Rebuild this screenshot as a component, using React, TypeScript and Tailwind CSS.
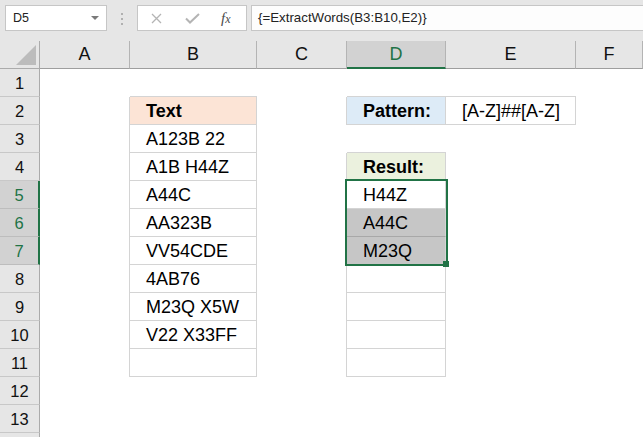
import React from 'react'

type Cell = { text: string; bold?: boolean; bg?: string }

const COLS = ['A', 'B', 'C', 'D', 'E', 'F']
const ROWS = Array.from({ length: 14 }, (_, i) => i + 1)

// cells that carry a thin border
const bordered = new Set([
  'B2', 'B3', 'B4', 'B5', 'B6', 'B7', 'B8', 'B9', 'B10', 'B11',
  'D2', 'E2',
  'D4', 'D5', 'D6', 'D7', 'D8', 'D9', 'D10', 'D11',
])

const cells: Record<string, Cell> = {
  B2: { text: 'Text', bold: true, bg: 'bg-[#fce4d6]' },
  B3: { text: 'A123B 22' },
  B4: { text: 'A1B H44Z' },
  B5: { text: 'A44C' },
  B6: { text: 'AA323B' },
  B7: { text: 'VV54CDE' },
  B8: { text: '4AB76' },
  B9: { text: 'M23Q X5W' },
  B10: { text: 'V22 X33FF' },
  D2: { text: 'Pattern:', bold: true, bg: 'bg-[#ddebf7]' },
  E2: { text: '[A-Z]##[A-Z]' },
  D4: { text: 'Result:', bold: true, bg: 'bg-[#ebf1de]' },
  D5: { text: 'H44Z' },
  D6: { text: 'A44C', bg: 'bg-[#c6c6c6]' },
  D7: { text: 'M23Q', bg: 'bg-[#c6c6c6]' },
}

const nextCol = (c: string) => COLS[COLS.indexOf(c) + 1]

function SheetCell({ col, row }: { col: string; row: number }) {
  const id = `${col}${row}`
  const cell = cells[id]
  const right = bordered.has(id) || (nextCol(col) && bordered.has(`${nextCol(col)}${row}`))
  const bottom = bordered.has(id) || bordered.has(`${col}${row + 1}`)
  const darkBottom = id === 'D6'
  return (
    <div
      className={`flex items-center pl-[16px] pt-[1px] whitespace-nowrap text-[18px] text-black ${
        cell?.bg ?? 'bg-white'
      } ${cell?.bold ? 'font-bold' : ''} ${right ? 'border-r border-r-[#d4d4d4]' : ''} ${
        bottom ? (darkBottom ? 'border-b border-b-[#a8a8a8]' : 'border-b border-b-[#d4d4d4]') : ''
      }`}
    >
      {cell?.text}
    </div>
  )
}

export default function App() {
  return (
    <div className="w-[643px] h-[437px] overflow-hidden bg-white font-['Liberation_Sans',Arial,sans-serif]">
      {/* formula bar */}
      <div className="h-[41px] bg-[#e6e6e6] flex items-start pt-[5px]">
        <div className="ml-[5px] w-[102px] h-[26px] bg-white border border-[#c6c6c6] flex items-center justify-between pl-[7px] pr-[7px]">
          <span className="text-[12.5px] text-[#222]">D5</span>
          <svg width="8" height="4" viewBox="0 0 8 4">
            <path d="M0 0h8L4 4z" fill="#7a7a7a" />
          </svg>
        </div>
        <div className="ml-[14px] mt-[8px] flex flex-col gap-[3px]">
          <div className="w-[2px] h-[2px] bg-[#b0b0b0]" />
          <div className="w-[2px] h-[2px] bg-[#b0b0b0]" />
          <div className="w-[2px] h-[2px] bg-[#b0b0b0]" />
        </div>
        <div className="ml-[14px] w-[110px] h-[26px] bg-white border border-[#c6c6c6] flex items-center pl-[13px]">
          <svg width="11" height="11" viewBox="0 0 11 11">
            <path d="M1 1L10 10M10 1L1 10" stroke="#b4b4b4" strokeWidth="1.3" />
          </svg>
          <svg className="ml-[23px]" width="15" height="11" viewBox="0 0 15 11">
            <path d="M1 5.5L5 9.5L14 1" stroke="#b4b4b4" strokeWidth="2" fill="none" />
          </svg>
          <span className="ml-[21px] font-['Liberation_Serif',serif] italic text-[15px] text-[#4a4a4a] leading-none">
            f<span className="text-[12px]">x</span>
          </span>
        </div>
        <div className="ml-[4px] flex-1 h-[26px] bg-[#fdfdfd] border-y border-l border-[#c6c6c6] flex items-center pl-[6px]">
          <span className="text-[13.3px] text-[#222] whitespace-nowrap">{'{=ExtractWords(B3:B10,E2)}'}</span>
        </div>
      </div>

      {/* sheet */}
      <div className="relative grid grid-cols-[40px_90px_127px_90px_99px_130px_67px] auto-rows-[28px]">
        {/* header row */}
        <div className="bg-[#e6e6e6] border-r border-b border-[#ababab] flex items-end justify-end pr-[3px] pb-[3px]">
          <svg width="20" height="20" viewBox="0 0 20 20">
            <path d="M20 0V20H0z" fill="#bcbcbc" />
          </svg>
        </div>
        {COLS.map((c) =>
          c === 'D' ? (
            <div
              key={c}
              className="bg-[#d2d2d2] border-r border-r-[#b4b4b4] border-b-2 border-b-[#217346] flex items-center justify-center text-[18px] text-[#217346]"
            >
              {c}
            </div>
          ) : (
            <div
              key={c}
              className="bg-[#e6e6e6] border-r border-r-[#b4b4b4] border-b border-b-[#9e9e9e] flex items-center justify-center text-[18px] text-[#111]"
            >
              {c}
            </div>
          )
        )}

        {ROWS.map((r) => (
          <React.Fragment key={r}>
            {r >= 5 && r <= 7 ? (
              <div className="bg-[#d2d2d2] border-r-2 border-r-[#217346] border-b border-b-[#bdbdbd] flex items-center justify-center pt-[2px] text-[16.5px] text-[#217346]">
                {r}
              </div>
            ) : (
              <div className="bg-[#e6e6e6] border-r border-r-[#ababab] border-b border-b-[#c8c8c8] flex items-center justify-center pt-[2px] text-[16.5px] text-[#111]">
                {r < 14 ? r : ''}
              </div>
            )}
            {COLS.map((c) => (
              <SheetCell key={c} col={c} row={r} />
            ))}
          </React.Fragment>
        ))}

        {/* selection D5:D7 */}
        <div className="absolute left-[345px] top-[138px] w-[103px] h-[87px] border-2 border-[#217346] pointer-events-none" />
        <div className="absolute left-[443px] top-[220px] w-[6px] h-[6px] bg-[#217346]" />
      </div>
    </div>
  )
}
